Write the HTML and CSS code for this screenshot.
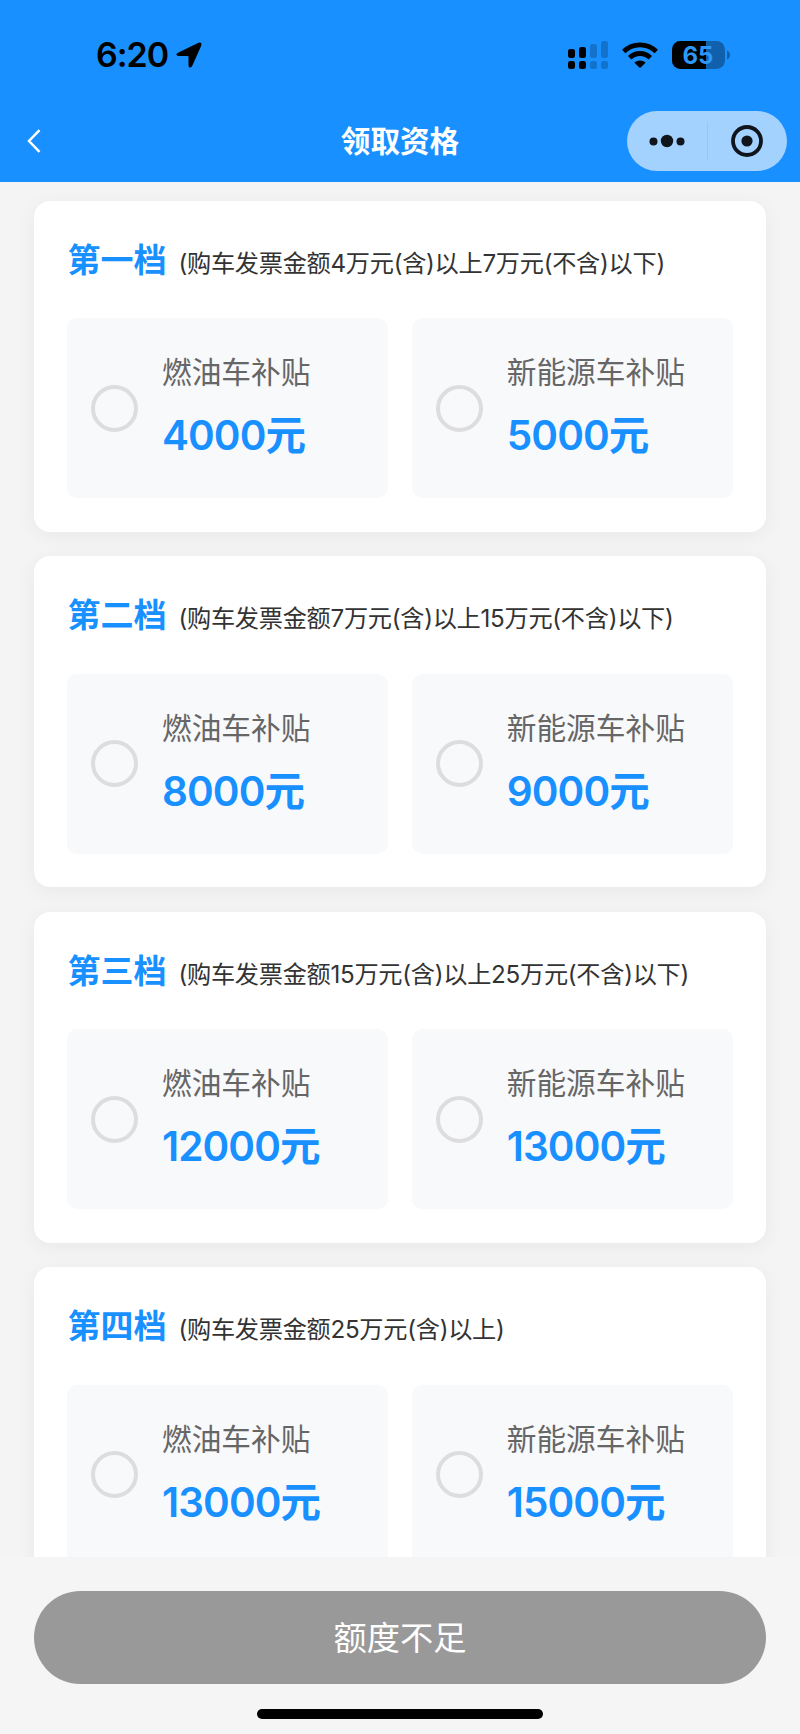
FILE: index.html
```
<!DOCTYPE html>
<html lang="zh-CN">
<head>
  <meta charset="UTF-8" />
  <title>领取资格</title>
  <link rel="stylesheet" href="styles.css">
</head>
<body>

<header class="header">
  <div class="status-bar">
    <div class="status-left">
      <span class="time">6:20</span>
      <svg class="icon-location" width="26" height="26" viewBox="0 0 26 26"><path d="M2 10.800 L22 1 Q26.600 -.6 25.100 4 L16.400 23.600 Q15.300 26.200 13.500 25.400 Q12.500 24.900 12.500 23.500 V14.900 Q12.500 14 11.700 14 H2.600 Q.4 13.900 .4 12.500 Q.5 11.600 2 10.800 Z"/></svg>
    </div>
    <div class="status-right">
      <svg width="41" height="28" viewBox="0 0 41 28">
        <rect x="0" y="8" width="7" height="9" rx="2.3"/>
        <rect x="11" y="6" width="7" height="11" rx="2.3"/>
        <rect x="0" y="20" width="7" height="8" rx="2.3"/>
        <rect x="11" y="20" width="7" height="8" rx="2.3"/>
        <g opacity=".2">
          <rect x="22" y="3" width="7" height="14" rx="2.3"/>
          <rect x="33" y="0" width="7" height="17" rx="2.3"/>
          <rect x="22" y="20" width="7" height="8" rx="2.3"/>
          <rect x="33" y="20" width="7" height="8" rx="2.3"/>
        </g>
      </svg>
      <svg class="icon-wifi" width="36" height="26" viewBox="0 0 36 26">
        <g fill="none" stroke="#000" stroke-width="4.8">
          <path d="M1.7 9.5 A23.2 23.2 0 0 1 34.3 9.5"/>
          <path d="M7.7 15.8 A14.5 14.5 0 0 1 28.3 15.8"/>
        </g>
        <path d="M12.3 20.5 Q18 16.3 23.7 20.5 L18.7 25.5 Q18 26.1 17.3 25.5 Z"/>
      </svg>
      <svg class="icon-battery" width="58" height="28" viewBox="0 0 58 28">
        <defs>
          <clipPath id="charged"><rect width="34" height="28"/></clipPath>
        </defs>
        <rect width="53" height="28" rx="8.5" opacity=".33"/>
        <rect width="53" height="28" rx="8.5" clip-path="url(#charged)"/>
        <path d="M55 9.5 Q58 11 58 14 Q58 17 55 18.5 Z" opacity=".33"/>
        <text class="battery-text" x="26" y="22.7" text-anchor="middle">65</text>
      </svg>
    </div>
  </div>
  <div class="nav-bar">
    <svg class="icon-back" width="14" height="24" viewBox="0 0 14 24"><path d="M12.5 1.2 L2 12 L12.5 22.8" fill="none" stroke="#fff" stroke-width="2.5"/></svg>
    <h1 class="nav-title">领取资格</h1>
    <div class="capsule">
      <svg class="icon-more" width="36" height="14" viewBox="0 0 36 14"><circle cx="4.5" cy="7.4" r="4"/><circle cx="18" cy="7" r="6.2"/><circle cx="31.500" cy="7.4" r="4"/></svg>
      <span class="capsule-line"></span>
      <svg class="icon-target" width="32" height="32" viewBox="0 0 32 32"><circle cx="16" cy="16" r="14" fill="none" stroke="#10151b" stroke-width="3.8"/><circle cx="16" cy="16" r="5.6"/></svg>
    </div>
  </div>
</header>

<main class="list">
  <section class="card">
    <h2 class="card-title">第一档 <span class="card-desc">(购车发票金额4万元(含)以上7万元(不含)以下)</span></h2>
    <div class="options">
      <div class="option">
        <span class="radio"></span>
        <div class="option-info">
          <div class="option-name">燃油车补贴</div>
          <div class="option-amount">4000元</div>
        </div>
      </div>
      <div class="option">
        <span class="radio"></span>
        <div class="option-info">
          <div class="option-name">新能源车补贴</div>
          <div class="option-amount">5000元</div>
        </div>
      </div>
    </div>
  </section>

  <section class="card">
    <h2 class="card-title">第二档 <span class="card-desc">(购车发票金额7万元(含)以上15万元(不含)以下)</span></h2>
    <div class="options">
      <div class="option">
        <span class="radio"></span>
        <div class="option-info">
          <div class="option-name">燃油车补贴</div>
          <div class="option-amount">8000元</div>
        </div>
      </div>
      <div class="option">
        <span class="radio"></span>
        <div class="option-info">
          <div class="option-name">新能源车补贴</div>
          <div class="option-amount">9000元</div>
        </div>
      </div>
    </div>
  </section>

  <section class="card">
    <h2 class="card-title">第三档 <span class="card-desc">(购车发票金额15万元(含)以上25万元(不含)以下)</span></h2>
    <div class="options">
      <div class="option">
        <span class="radio"></span>
        <div class="option-info">
          <div class="option-name">燃油车补贴</div>
          <div class="option-amount">12000元</div>
        </div>
      </div>
      <div class="option">
        <span class="radio"></span>
        <div class="option-info">
          <div class="option-name">新能源车补贴</div>
          <div class="option-amount">13000元</div>
        </div>
      </div>
    </div>
  </section>

  <section class="card">
    <h2 class="card-title">第四档 <span class="card-desc">(购车发票金额25万元(含)以上)</span></h2>
    <div class="options">
      <div class="option">
        <span class="radio"></span>
        <div class="option-info">
          <div class="option-name">燃油车补贴</div>
          <div class="option-amount">13000元</div>
        </div>
      </div>
      <div class="option">
        <span class="radio"></span>
        <div class="option-info">
          <div class="option-name">新能源车补贴</div>
          <div class="option-amount">15000元</div>
        </div>
      </div>
    </div>
  </section>
</main>

<footer class="footer">
  <button class="btn-submit" disabled>额度不足</button>
  <div class="home-indicator"></div>
</footer>

</body>
</html>
```
FILE: styles.css
```
* { box-sizing: border-box; }
body {
  margin: 0;
  height: 1734px;
  display: flex;
  flex-direction: column;
  overflow: hidden;
  background: #f4f4f4;
  font-family: Inter, "Noto Sans CJK SC", sans-serif;
}
svg { display: block; }

/* Header */
.header {
  height: 182.4px;
  flex-shrink: 0;
  background: #1890ff;
}
.status-bar {
  height: 108px;
  padding: 1px 70px 0 96px;
  display: flex;
  justify-content: space-between;
  align-items: center;
}
.status-left, .status-right { display: flex; align-items: center; }
.time {
  width: 80px;
  font-size: 34px;
  font-weight: 600;
  line-height: 40px;
  letter-spacing: -1px;
}
.icon-wifi { margin-left: 13px; }
.icon-battery { margin-left: 14px; }
.battery-text { fill: #2d98fa; font-size: 24px; font-weight: 700; }
.nav-bar {
  height: 67px;
  margin-top: -1px;
  padding: 0 13.5px 0 27px;
  display: grid;
  grid-template-columns: 1fr auto 1fr;
  align-items: center;
}
.nav-title {
  margin: 0;
  padding-right: 13.5px;
  color: #fff;
  font-size: 29.6px;
  font-weight: 600;
  line-height: 40px;
}
.capsule {
  justify-self: end;
  width: 160px;
  height: 60px;
  padding: 0 24px 0 22px;
  display: flex;
  justify-content: space-between;
  align-items: center;
  border-radius: 30px;
  background: #a3d2ff;
  fill: #10151b;
}
.capsule-line { width: 1px; height: 38px; background: #96c7f7; }

/* Card list */
.list {
  flex: 1;
  min-height: 0;
  padding: 18.6px 33.8px 0;
  overflow: hidden;
}
.card {
  height: 331px;
  margin-bottom: 24.5px;
  padding: 32.7px 33.7px;
  border-radius: 16px;
  background: #fff;
  box-shadow: 0 4px 20px rgba(0,0,0,0.05);
}
.card-title {
  margin: 0 0 32.7px;
  height: 52px;
  display: flex;
  align-items: baseline;
  gap: 12px;
  color: #1890ff;
  font-size: 33px;
  font-weight: 600;
  line-height: 52px;
  white-space: nowrap;
}
.card-desc {
  color: #333;
  font-size: 24.2px;
  font-weight: 400;
  letter-spacing: -0.28px;
}
.options {
  display: grid;
  grid-template-columns: 1fr 1fr;
  gap: 24.5px;
}
.option {
  height: 180px;
  padding-left: 24px;
  display: flex;
  align-items: center;
  gap: 23.5px;
  border-radius: 10px;
  background: #f8f9fb;
}
.radio {
  width: 47px;
  height: 47px;
  border: 4px solid #ddd;
  border-radius: 50%;
}
.option-name {
  color: #666;
  font-size: 29.7px;
  line-height: 44px;
  margin-bottom: 12px;
}
.option-amount {
  color: #1890ff;
  font-size: 40.5px;
  font-weight: 600;
  line-height: 60px;
  letter-spacing: -0.9px;
}

/* Bottom button */
.footer {
  height: 177px;
  flex-shrink: 0;
  padding: 33.5px 33.7px 0;
  background: #f5f5f5;
}
.btn-submit {
  display: block;
  width: 100%;
  height: 93px;
  padding: 0 0 4px;
  border: none;
  border-radius: 47px;
  background: #999;
  color: #fff;
  font-family: inherit;
  font-size: 33.3px;
}
.home-indicator {
  width: 286px;
  height: 9.5px;
  margin: 25.7px auto 0;
  border-radius: 5px;
  background: #000;
}
```
